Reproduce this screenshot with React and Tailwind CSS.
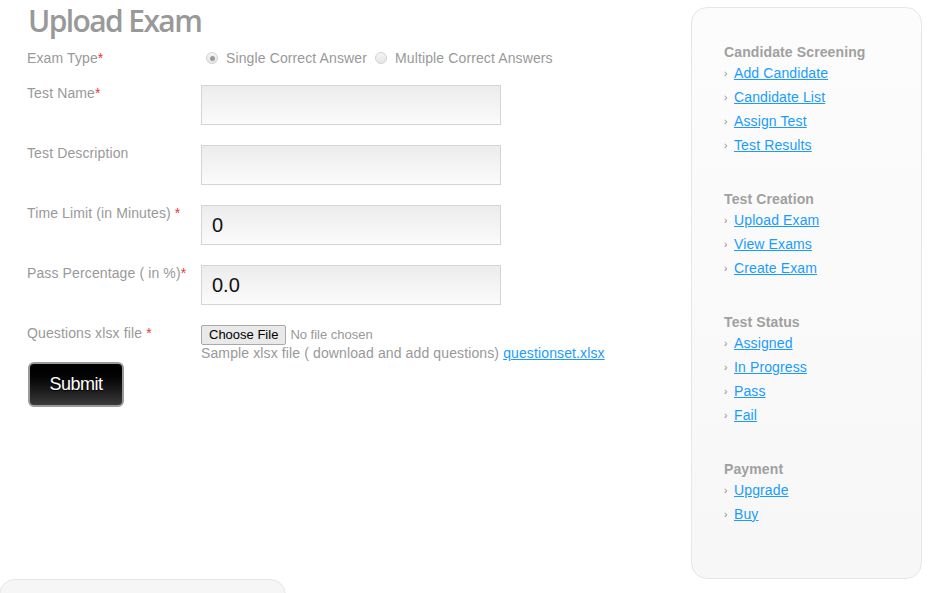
import React from 'react';

const sections = [
  { title: 'Candidate Screening', links: ['Add Candidate', 'Candidate List', 'Assign Test', 'Test Results'] },
  { title: 'Test Creation', links: ['Upload Exam', 'View Exams', 'Create Exam'] },
  { title: 'Test Status', links: ['Assigned', 'In Progress', 'Pass', 'Fail'] },
  { title: 'Payment', links: ['Upgrade', 'Buy'] },
];

const Req = () => <span className="text-[#e33]">*</span>;

const Radio = ({ checked, label }) => (
  <label className="flex items-center">
    <span className="w-[12px] h-[12px] rounded-full border border-[#d2d2d2] bg-gradient-to-b from-[#f4f4f4] to-[#e6e6e6] flex items-center justify-center">
      {checked && <span className="w-[5px] h-[5px] rounded-full bg-[#9a9a9a]" />}
    </span>
    <span className="ml-[8px]">{label}</span>
  </label>
);

const Field = ({ label, value }) => (
  <div className="flex h-[40px] mb-[20px]">
    <div className="w-[174px] leading-[16px]">{label}</div>
    <div className="w-[300px] h-[40px] border border-[#d4d4d4] bg-gradient-to-b from-[#ececec] to-[#fbfbfb] flex items-center pl-[10px] text-[20px] tracking-normal text-[#111]">
      {value}
    </div>
  </div>
);

export default function App() {
  return (
    <div className="relative w-[944px] h-[593px] overflow-hidden bg-white font-['Liberation_Sans',Arial,sans-serif] text-[14px] tracking-[0.12px] text-[#999]">
      <div className="flex">
        <div className="w-[691px] pl-[27px]">
          <h1 className="mt-[4px] h-[34px] font-['Open_Sans',sans-serif] font-semibold text-[30px] leading-[34px] tracking-[-1.6px] text-[#999] pl-[1px]">
            Upload Exam
          </h1>
          <div className="flex mt-[12px] h-[16px] leading-[16px] mb-[19px]">
            <div className="w-[174px]">Exam Type<Req /></div>
            <div className="flex items-center gap-[8px] pl-[5px]">
              <Radio checked label="Single Correct Answer" />
              <Radio label="Multiple Correct Answers" />
            </div>
          </div>
          <Field label={<>Test Name<Req /></>} />
          <Field label="Test Description" />
          <Field label={<>Time Limit (in Minutes) <Req /></>} value="0" />
          <Field label={<>Pass Percentage ( in %)<Req /></>} value="0.0" />
          <div className="flex leading-[16px]">
            <div className="w-[174px]">Questions xlsx file <Req /></div>
            <div>
              <div className="flex items-center h-[20px] text-[13px] tracking-normal">
                <span className="h-[20px] px-[7px] border border-[#a9a9a9] rounded-[2px] bg-[#e9e9e9] text-black leading-[18px]">Choose File</span>
                <span className="ml-[4px] text-[#999]">No file chosen</span>
              </div>
              <div>
                Sample xlsx file ( download and add questions){' '}
                <a href="#" className="text-[#1a9cff] underline">questionset.xlsx</a>
              </div>
            </div>
          </div>
          <button className="mt-[1px] ml-[1px] w-[96px] h-[45px] rounded-[6px] border-2 border-[#9a9a9a] bg-gradient-to-b from-[#000] to-[#3b3b3b] text-white text-[18px] tracking-[-0.5px] [text-shadow:0_1px_1px_#000]">
            Submit
          </button>
        </div>
        <aside className="mt-[7px] w-[231px] h-[572px] rounded-[16px] border border-[#e6e6e6] bg-gradient-to-b from-[#fcfcfc] to-[#f7f7f7] pl-[32px] pt-[36px]">
          {sections.map((s) => (
            <div key={s.title} className="mb-[34px]">
              <div className="font-bold text-[14px] leading-[16px] text-[#a0a0a0]">{s.title}</div>
              <ul className="mt-[1px]">
                {s.links.map((l) => (
                  <li key={l} className="flex items-center h-[24px]">
                    <span className="w-[10px] text-[10px] text-[#888]">›</span>
                    <a href="#" className="text-[#1a9cff] underline">{l}</a>
                  </li>
                ))}
              </ul>
            </div>
          ))}
        </aside>
      </div>
      <div className="absolute left-[-1px] top-[579px] w-[287px] h-[40px] rounded-t-[16px] border border-[#e6e6e6] bg-[#f6f6f6]" />
    </div>
  );
}
